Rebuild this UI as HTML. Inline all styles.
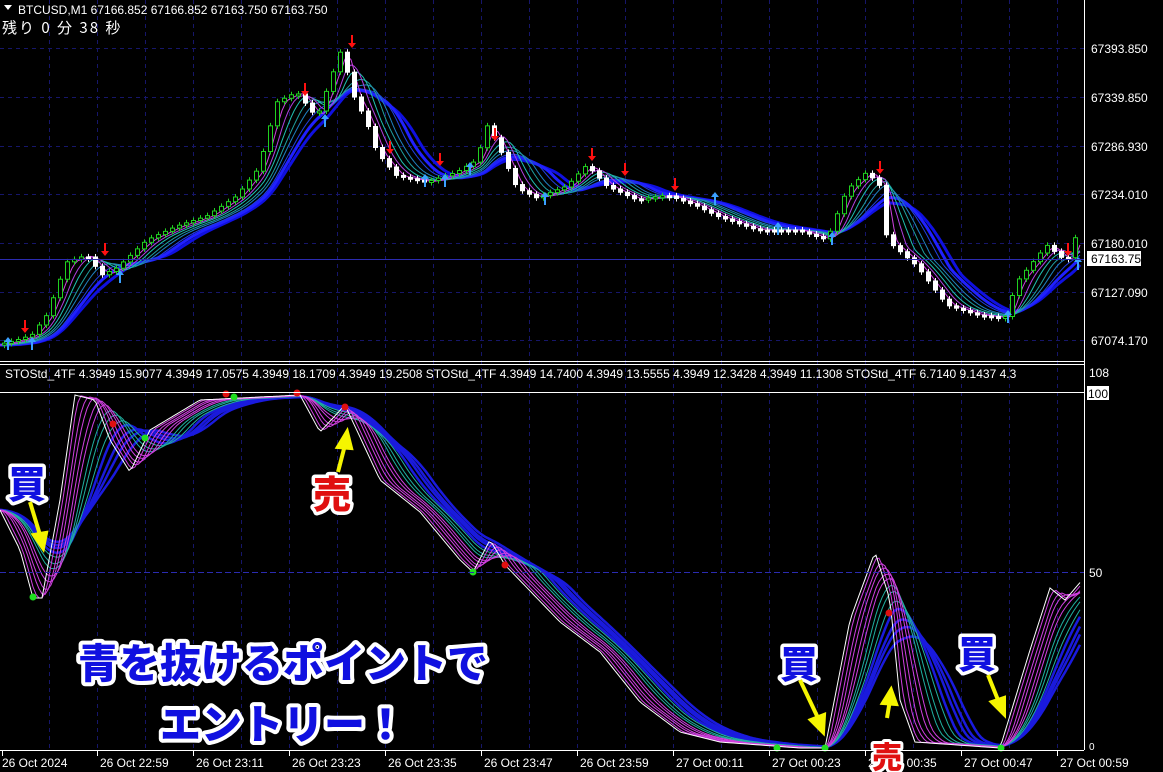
<!DOCTYPE html>
<html><head><meta charset="utf-8"><style>
html,body{margin:0;padding:0;background:#000;width:1163px;height:772px;overflow:hidden}
svg{display:block}
text{font-family:"Liberation Sans","Noto Sans CJK JP",sans-serif}
.ax{fill:#fff;font-size:12px}
.big{font-family:"Noto Sans CJK JP",sans-serif;font-weight:900;paint-order:stroke;stroke:#fff;stroke-linejoin:round}
</style></head><body>
<svg id="s" width="1163" height="772" xmlns="http://www.w3.org/2000/svg">
<rect width="1163" height="772" fill="#000"/>
<g id="grid" stroke="#16166a" stroke-dasharray="4,4" stroke-width="1"></g>
<g id="lines"></g>
<g id="cand"></g>
<line x1="0" y1="361.5" x2="1084" y2="361.5" stroke="#fff"/>
<line x1="0" y1="364.5" x2="1084" y2="364.5" stroke="#fff"/>
<line x1="0" y1="392.5" x2="1084" y2="392.5" stroke="#fff"/>
<line x1="0" y1="750.5" x2="1084" y2="750.5" stroke="#fff"/>
<line x1="1084.5" y1="0" x2="1084.5" y2="750" stroke="#fff"/>
<line x1="0" y1="259.5" x2="1084" y2="259.5" stroke="#2b2bb0"/>
<line x1="0" y1="572.5" x2="1084" y2="572.5" stroke="#2b2bb0" stroke-dasharray="6,3"/>
<polygon points="4,5 12,5 8,10" fill="#fff"/>
<text x="18" y="14" fill="#fff" font-size="12">BTCUSD,M1  67166.852 67166.852 67163.750 67163.750</text>
<text x="2" y="33" fill="#fff" font-size="15" style="font-family:'Noto Sans CJK JP',sans-serif" letter-spacing="2">残り 0 分 38 秒</text>
<text x="5" y="378" fill="#fff" font-size="12">STOStd_4TF 4.3949 15.9077 4.3949 17.0575 4.3949 18.1709 4.3949 19.2508   STOStd_4TF 4.3949 14.7400 4.3949 13.5555 4.3949 12.3428 4.3949 11.1308   STOStd_4TF 6.7140 9.1437 4.3</text>
<rect x="1085" y="364" width="78" height="20" fill="#000"/>
<g class="ax" id="axis">
<text x="1091" y="53">67393.850</text><text x="1091" y="102">67339.850</text><text x="1091" y="151">67286.930</text><text x="1091" y="199">67234.010</text><text x="1091" y="248">67180.010</text><text x="1091" y="297">67127.090</text><text x="1091" y="345">67074.170</text>
<rect x="1087" y="251" width="54" height="15" fill="#fff"/><text x="1091" y="263" style="fill:#000">67163.750</text>
<text x="1089" y="377">108</text>
<rect x="1087" y="386" width="22" height="14" fill="#fff"/><text x="1088" y="398" style="fill:#000">100</text>
<text x="1089" y="577">50</text>
<text x="1089" y="750" font-size="10">0</text>
</g>
<g id="bt" class="ax"></g>
<g class="big">
<text x="8" y="498" font-size="38" fill="#1010e0" stroke-width="7">買</text>
<text x="313" y="508" font-size="38" fill="#e01010" stroke-width="7">売</text>
<text x="780" y="678" font-size="38" fill="#1010e0" stroke-width="7">買</text>
<text x="958" y="668" font-size="38" fill="#1010e0" stroke-width="7">買</text>
<text x="872" y="768" font-size="30" fill="#e01010" stroke-width="6">売</text>
<text x="78" y="678" font-size="41" fill="#1010e0" stroke-width="8">青を抜けるポイントで</text>
<text x="160" y="739" font-size="41" fill="#1010e0" stroke-width="8">エントリー！</text>
</g>
<g stroke="#f5f500" stroke-width="4" fill="#f5f500">
<line x1="30" y1="502" x2="40" y2="535"/><polygon points="34,535 46,533 43,548"/>
<line x1="338" y1="472" x2="345" y2="445"/><polygon points="338,447 351,448 347,432"/>
<line x1="800" y1="680" x2="818" y2="718"/><polygon points="811,720 824,715 823,732"/>
<line x1="887" y1="718" x2="890" y2="700"/><polygon points="883,703 896,704 891,690"/>
<line x1="988" y1="675" x2="998" y2="700"/><polygon points="992,702 1004,698 1004,714"/>
</g>
</svg>
<script>
var NS="http://www.w3.org/2000/svg",s=document.getElementById('s');
function el(p,t,a){var e=document.createElementNS(NS,t);for(var k in a)e.setAttribute(k,a[k]);p.appendChild(e);return e;}
var G=document.getElementById('grid');
for(var x=49;x<1084;x+=48)el(G,'line',{x1:x+.5,y1:0,x2:x+.5,y2:750});
[48,97,146,194,243,292,340].forEach(function(y){el(G,'line',{x1:0,y1:y+.5,x2:1084,y2:y+.5});});
var bt=document.getElementById('bt');
var labs=["26 Oct 2024","26 Oct 22:59","26 Oct 23:11","26 Oct 23:23","26 Oct 23:35","26 Oct 23:47","26 Oct 23:59","27 Oct 00:11","27 Oct 00:23","27 Oct 00:35","27 Oct 00:47","27 Oct 00:59"];
labs.forEach(function(l,i){var x=i==0?2:1+i*96;el(bt,'line',{x1:x+.5,y1:751,x2:x+.5,y2:756,stroke:'#fff'});var t=el(bt,'text',{x:x+(i?3:0),y:767});t.textContent=l;});
function interp(P,x){for(var i=1;i<P.length;i++){if(x<=P[i][0]){var a=P[i-1],b=P[i],t=(x-a[0])/(b[0]-a[0]||1);return a[1]+(b[1]-a[1])*t;}}return P[P.length-1][1];}
function smooth(f,lag,x){var s=0,n=0;for(var d=0;d<=lag;d+=2){s+=f(x-d);n++;}return s/n;}
var L=document.getElementById('lines');
function draw(f,col,w){var pts=[];for(var x=0;x<=1082;x+=3)pts.push(x+','+f(x).toFixed(1));el(L,'polyline',{points:pts.join(' '),fill:'none',stroke:col,'stroke-width':w});}
var PR=[[0,345],[20,340],[35,335],[50,315],[70,262],[90,255],[105,275],[120,268],[150,240],[180,226],[210,216],[240,196],[262,168],[280,102],[300,92],[320,118],[345,48],[355,92],[370,122],[380,152],[400,176],[430,182],[460,172],[480,160],[490,125],[500,142],[520,188],[540,198],[570,186],[590,165],[610,186],[640,200],[670,195],[700,206],[720,216],[760,230],[800,230],[830,240],[850,190],[870,172],[885,188],[890,240],[920,266],[950,305],[980,315],[1008,318],[1020,282],[1050,245],[1070,262],[1084,222]];
var pf=function(x){return interp(PR,Math.max(0,x));};
var cols=['#ff40ff','#d040e0','#b040e0','#20c0b0','#20a0a0','#2080c0','#2040e0','#2020ff','#1010e0'];
for(var k=8;k>=1;k--){(function(k){draw(function(x){return smooth(pf,k*9,x);},cols[k],k>6?3:1);})(k);}
var C=document.getElementById('cand');
for(var x=4;x<1082;x+=7){var o=pf(x-3.5),c=pf(x+3.5);var up=c<o;var t=Math.min(o,c),b=Math.max(o,c);if(b-t<2)b=t+2;
 el(C,'line',{x1:x+.5,y1:t-3,x2:x+.5,y2:b+3,stroke:up?'#20d020':'#fff'});
 el(C,'rect',{x:x-1.5,y:t,width:4,height:b-t,fill:up?'#000':'#fff',stroke:up?'#20d020':'#fff','stroke-width':1});}
[[8,345,1],[32,345,1],[25,327,0],[105,250,0],[120,278,1],[305,90,0],[352,42,0],[325,122,1],[390,148,0],[425,182,1],[445,182,1],[440,160,0],[470,170,1],[495,135,0],[545,200,1],[592,155,0],[625,170,0],[675,185,0],[715,200,1],[778,230,1],[832,240,1],[880,168,0],[1008,318,1],[1068,250,0],[1078,265,1]].forEach(function(a){
 var x=a[0],y=a[1];if(a[2]){el(C,'path',{d:'M'+x+' '+(y-8)+'l-4 5h3v8h2v-8h3z',fill:'#3aa0ff'});}else{el(C,'path',{d:'M'+x+' '+(y+6)+'l-4 -5h3v-8h2v8h3z',fill:'#ff1010'});}});
var W=[[0,510],[20,550],[33,598],[42,598],[60,500],[75,395],[95,400],[110,440],[130,472],[150,430],[200,400],[300,395],[320,432],[345,405],[380,480],[420,512],[460,560],[473,572],[490,540],[505,565],[560,622],[600,652],[640,702],[680,732],[720,742],[800,748],[825,748],[850,620],[875,552],[890,600],[900,700],[915,742],[1000,748],[1030,650],[1050,588],[1065,600],[1084,578]];
var wf=function(x){return interp(W,Math.max(0,x));};
for(var k=12;k>=1;k--){(function(k){var c=k>8?'#1a1add':(k>5?'#20b0a0':'#d040e0');draw(function(x){return Math.min(749,smooth(wf,k*7,x));},c,k>8?2.5:1);})(k);}
draw(wf,'#fff',1);
[[33,597,'#20e020'],[113,424,'#e01010'],[145,438,'#20e020'],[226,394,'#e01010'],[234,397,'#20e020'],[297,393,'#e01010'],[345,407,'#e01010'],[473,572,'#20e020'],[505,565,'#e01010'],[777,748,'#20e020'],[825,748,'#20e020'],[889,613,'#e01010'],[1001,748,'#20e020']].forEach(function(d){el(L,'circle',{cx:d[0],cy:d[1],r:3.5,fill:d[2]});});
</script>
</body></html>
